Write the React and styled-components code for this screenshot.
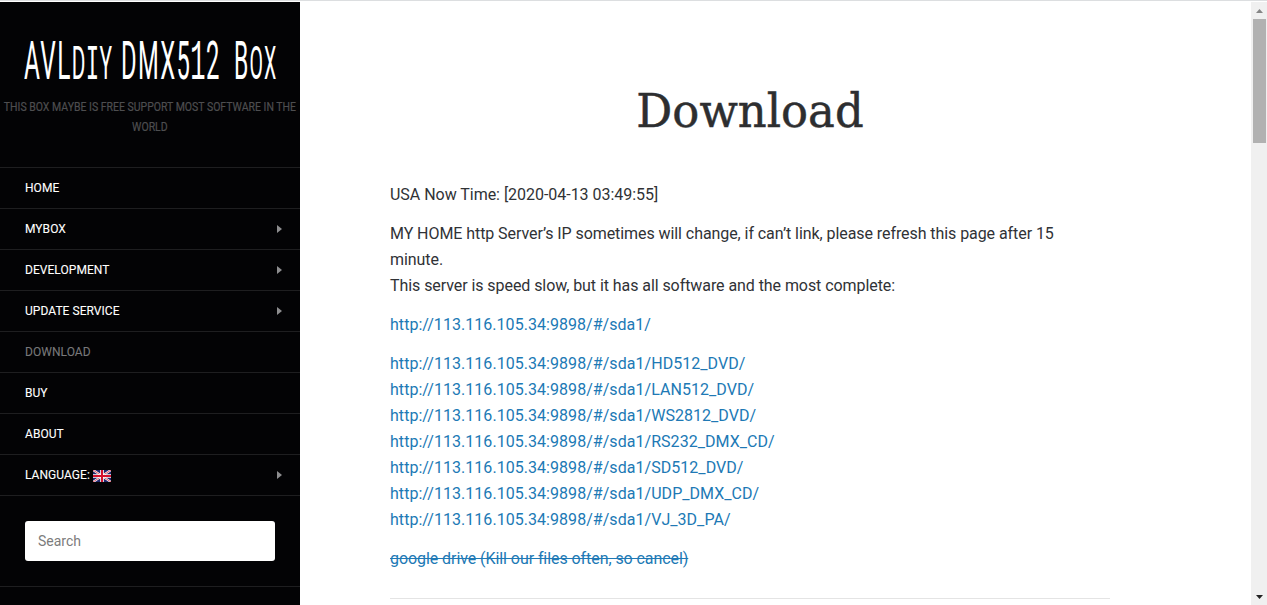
import React from "react";
import styled, { createGlobalStyle } from "styled-components";

const GlobalStyle = createGlobalStyle`
  * { box-sizing: border-box; }
  html, body { margin: 0; height: 605px; overflow: hidden; background: #fff; }
  body { font-family: Roboto, "Liberation Sans", sans-serif; color: #303236; }
`;

const Page = styled.div`
  display: flex;
  height: 605px;
  overflow: hidden;
  border-top: 1px solid #dcdee0;
`;

const Sidebar = styled.aside`
  flex: 0 0 300px;
  min-width: 0;
  margin-top: 1px;
  background: #030305;
  color: #fff;
`;

const Brand = styled.header`
  height: 165px;
  padding-top: 30px;
  text-align: center;
`;

const SiteTitle = styled.h1`
  display: flex;
  margin: 0 0 0 24px;
  height: 65px;
  font-size: 54px;
  font-weight: 400;
  line-height: 58px;
  letter-spacing: 3px;
  white-space: nowrap;
`;

const TitleWord = styled.span`
  flex: 0 0 ${(p) => p.$width}px;
  width: ${(p) => p.$width}px;
  transform: scaleX(${(p) => p.$scale});
  transform-origin: 0 50%;
  text-align: left;
`;

const SmallCap = styled.span`
  font-size: 46px;
  text-transform: uppercase;
`;

const SlabGlyph = styled.span`
  font-family: "Liberation Mono", monospace;
  font-size: 1.07em;
  line-height: 1;
  margin: 0 -2px;
`;

const Tagline = styled.p`
  width: 343px;
  margin: 0;
  font-size: 12px;
  line-height: 20px;
  color: #4e4e50;
  text-transform: uppercase;
  transform: scaleX(0.874);
  transform-origin: 0 50%;
  -webkit-text-stroke: 0.2px currentColor;
`;

const Menu = styled.nav`
  border-top: 1px solid #1e1e20;
`;

const MenuItem = styled.a`
  display: flex;
  align-items: center;
  height: 41px;
  padding: 0 18px 0 25px;
  border-bottom: 1px solid #1e1e20;
  font-size: 12px;
  letter-spacing: 0.05px;
  color: ${(p) => (p.$current ? "#78787a" : "#fff")};
  -webkit-text-stroke: 0.1px currentColor;
`;

const Arrow = styled.span`
  margin-left: auto;
  border: 4.5px solid transparent;
  border-left: 5px solid #8d8d8f;
  border-right: 0;
`;

const FlagIcon = styled.svg`
  width: 18px;
  height: 12px;
  margin: 2px 0 0 3px;
`;

const SearchArea = styled.form`
  height: 91px;
  padding: 25px;
  border-bottom: 1px solid #1e1e20;
`;

const SearchInput = styled.input`
  display: block;
  width: 250px;
  height: 40px;
  padding: 0 13px;
  border: 0;
  border-radius: 3px;
  background: #fff;
  font: 14px Roboto, sans-serif;
  &::placeholder { color: #7c7c7c; opacity: 1; }
`;

const Main = styled.main`
  flex: 1;
  padding: 78px 0 0 90px;
`;

const Article = styled.article`
  width: 720px;
  height: 520px;
  border-bottom: 1px solid #e4e4e4;
`;

const Heading = styled.h2`
  margin: 0 0 39px;
  height: 64px;
  font: 400 46px/64px "DejaVu Serif", serif;
  color: #2d2e30;
  text-align: center;
  -webkit-text-stroke: 0.5px currentColor;
  transform: scaleX(${(p) => p.$scale});
`;

const Paragraph = styled.p`
  margin: 0 0 13px;
  font-size: 16px;
  line-height: 26px;
  letter-spacing: ${(p) => p.$tracking || 0}px;
`;

const Link = styled.a`
  color: #2079b5;
  text-decoration: ${(p) => (p.$struck ? "line-through" : "none")};
`;

const Scrollbar = styled.div`
  display: flex;
  flex-direction: column;
  flex: 0 0 16px;
  margin-top: 1px;
  padding: 0 1px 0 2px;
  background: #f0f0f0;
`;

const ScrollButton = styled.div`
  display: flex;
  align-items: center;
  justify-content: center;
  height: 17px;
  color: ${(p) => p.$color};
`;

const Thumb = styled.div`
  height: 124px;
  margin-bottom: auto;
  background: #b1b1b1;
`;

const menu = [
  { label: "HOME" },
  { label: "MYBOX", arrow: true },
  { label: "DEVELOPMENT", arrow: true },
  { label: "UPDATE SERVICE", arrow: true },
  { label: "DOWNLOAD", current: true },
  { label: "BUY" },
  { label: "ABOUT" },
  { label: "LANGUAGE:", flag: true, arrow: true },
];

const base = "http://113.116.105.34:9898/#/sda1/";
const folders = ["HD512_DVD/", "LAN512_DVD/", "WS2812_DVD/", "RS232_DMX_CD/", "SD512_DVD/", "UDP_DMX_CD/", "VJ_3D_PA/"];

const Flag = () => (
  <FlagIcon viewBox="0 0 18 12">
    <path fill="#20276d" d="M0 0h18v12H0z" />
    <path stroke="#fff" strokeWidth="2.2" d="M0 0l18 12M18 0L0 12" />
    <path stroke="#d8263c" strokeWidth="0.8" d="M0 0l18 12M18 0L0 12" />
    <path stroke="#fff" strokeWidth="3.6" d="M9 0v12M0 6h18" />
    <path stroke="#d3122e" strokeWidth="2" d="M9 0v12M0 6h18" />
  </FlagIcon>
);

export default function App() {
  return (
    <>
      <GlobalStyle />
      <Page>
        <Sidebar>
          <Brand>
            <SiteTitle>
              <TitleWord $width={97} $scale={0.452}>AVL<SmallCap>d<SlabGlyph>i</SlabGlyph>y</SmallCap></TitleWord>
              <TitleWord $width={113} $scale={0.44}>DMX5<SlabGlyph>1</SlabGlyph>2</TitleWord>
              <TitleWord $width={44} $scale={0.425}>B<SmallCap>ox</SmallCap></TitleWord>
            </SiteTitle>
            <Tagline>This box maybe is free support most software in the world</Tagline>
          </Brand>
          <Menu>
            {menu.map((item) => (
              <MenuItem key={item.label} $current={item.current}>
                {item.label}
                {item.flag && <Flag />}
                {item.arrow && <Arrow />}
              </MenuItem>
            ))}
          </Menu>
          <SearchArea>
            <SearchInput placeholder="Search" />
          </SearchArea>
        </Sidebar>
        <Main>
          <Article>
            <Heading $scale={0.976}>Download</Heading>
            <Paragraph $tracking={-0.03}>USA Now Time: [2020-04-13 03:49:55]</Paragraph>
            <Paragraph $tracking={-0.07}>
              MY HOME http Server’s IP sometimes will change, if can’t link, please refresh this page after 15 minute.
              <br />
              This server is speed slow, but it has all software and the most complete:
            </Paragraph>
            <Paragraph $tracking={0.04}><Link>{base}</Link></Paragraph>
            <Paragraph $tracking={0.045}>
              {folders.map((folder) => (
                <React.Fragment key={folder}>
                  <Link>{base + folder}</Link>
                  <br />
                </React.Fragment>
              ))}
            </Paragraph>
            <Paragraph $tracking={-0.07}><Link $struck>google drive (Kill our files often, so cancel)</Link></Paragraph>
          </Article>
        </Main>
        <Scrollbar>
          <ScrollButton $color="#858585">
            <svg width="7" height="4"><path fill="currentColor" d="M0 4L3.5 0L7 4z" /></svg>
          </ScrollButton>
          <Thumb />
          <ScrollButton $color="#222">
            <svg width="7" height="4"><path fill="currentColor" d="M0 0L3.5 4L7 0z" /></svg>
          </ScrollButton>
        </Scrollbar>
      </Page>
    </>
  );
}
